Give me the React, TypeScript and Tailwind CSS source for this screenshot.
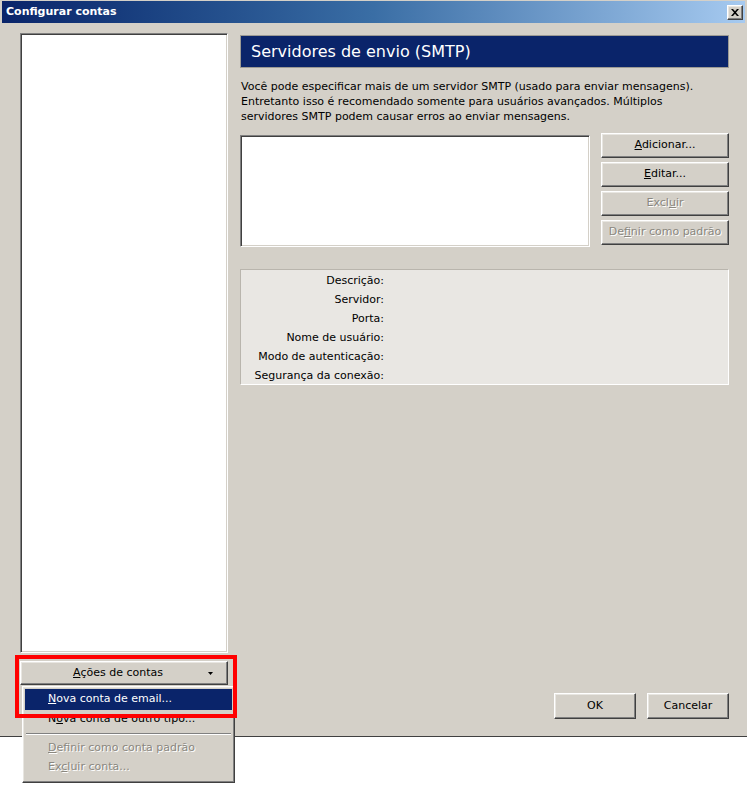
import React from "react";

const raised =
  "border border-t-white border-l-white border-r-[#404040] border-b-[#404040] shadow-[inset_-1px_-1px_#808080,inset_1px_1px_#e8e6e1]";
const sunken =
  "border border-t-[#808080] border-l-[#808080] border-r-white border-b-white shadow-[inset_1px_1px_#404040,inset_-1px_-1px_#d4d0c8]";
const disabled = "text-[#8a877f] [text-shadow:1px_1px_0_#ffffff]";

function Btn({
  children,
  off,
  className = "",
}: {
  children: React.ReactNode;
  off?: boolean;
  className?: string;
}) {
  return (
    <div
      className={`flex items-center justify-center bg-[#d4d0c8] ${raised} ${
        off ? disabled : "text-black"
      } ${className}`}
    >
      {children}
    </div>
  );
}

const labels = [
  "Descrição:",
  "Servidor:",
  "Porta:",
  "Nome de usuário:",
  "Modo de autenticação:",
  "Segurança da conexão:",
];

export default function App() {
  return (
    <div
      className="relative w-[747px] h-[785px] bg-white overflow-hidden text-[11px] text-black"
      style={{ fontFamily: '"DejaVu Sans", "Liberation Sans", sans-serif' }}
    >
      <div className="h-[737px] bg-[#d4d0c8] flex flex-col border-b border-[#404040]">
        {/* title bar */}
        <div className="h-[22px] mx-[2px] mt-[1px] flex items-center justify-between bg-gradient-to-r from-[#0a246a] via-[#3a6ea5] to-[#a6caf0] pl-[4px] pr-[2px]">
          <span className="text-white font-bold text-[11px]">Configurar contas</span>
          <div className={`w-[16px] h-[15px] bg-[#d4d0c8] flex items-center justify-center ${raised}`}>
            <svg width="8" height="7" viewBox="0 0 8 7">
              <path d="M0 0h2l2 2.2L6 0h2L5 3.5 8 7H6L4 4.8 2 7H0l3-3.5z" fill="#000" />
            </svg>
          </div>
        </div>

        {/* body */}
        <div className="flex-1 flex pt-[10px] pl-[20px] pr-[18px] pb-[17px] gap-[12px]">
          {/* left column */}
          <div className="w-[208px] flex flex-col">
            <div className={`h-[620px] bg-white ${sunken}`} />
            <Btn className="mt-[8px] h-[24px] relative">
              <span className="-ml-[12px]">
                <span className="underline">A</span>ções de contas
              </span>
              <svg className="absolute right-[14px] top-[10px]" width="5" height="3" viewBox="0 0 5 3">
                <path d="M0 0h5L2.5 3z" fill="#000" />
              </svg>
            </Btn>
          </div>

          {/* right column */}
          <div className="flex-1 flex flex-col">
            <div className="mt-[2px] h-[33px] bg-[#0a246a] border border-[#9c9a94] flex items-center pl-[10px]">
              <span className="text-white text-[16px]">Servidores de envio (SMTP)</span>
            </div>
            <p className="mt-[11px] leading-[15px] pl-[1px]">
              Você pode especificar mais de um servidor SMTP (usado para enviar mensagens).
              <br />
              Entretanto isso é recomendado somente para usuários avançados. Múltiplos
              <br />
              servidores SMTP podem causar erros ao enviar mensagens.
            </p>
            <div className="mt-[9px] flex gap-[11px] items-start">
              <div className={`mt-[2px] h-[112px] flex-1 bg-white ${sunken}`} />
              <div className="w-[128px] flex flex-col gap-[4px]">
                <Btn className="h-[25px]">
                  <span>
                    <span className="underline">A</span>dicionar...
                  </span>
                </Btn>
                <Btn className="h-[25px]">
                  <span>
                    <span className="underline">E</span>ditar...
                  </span>
                </Btn>
                <Btn className="h-[25px]" off>
                  <span>
                    Excl<span className="underline">u</span>ir
                  </span>
                </Btn>
                <Btn className="h-[25px]" off>
                  <span>
                    De<span className="underline">f</span>inir como padrão
                  </span>
                </Btn>
              </div>
            </div>

            <div className="mt-[22px] h-[116px] bg-[#e9e7e3] border border-t-[#b9b5ad] border-l-[#b9b5ad] border-r-white border-b-white pt-[1px]">
              {labels.map((l) => (
                <div key={l} className="w-[143px] text-right leading-[19px]">
                  {l}
                </div>
              ))}
            </div>

            <div className="mt-auto flex justify-end gap-[11px]">
              <Btn className="w-[82px] h-[26px]">OK</Btn>
              <Btn className="w-[82px] h-[26px]">Cancelar</Btn>
            </div>
          </div>
        </div>
      </div>

      {/* dropdown menu */}
      <div className={`absolute left-[22px] top-[686px] w-[213px] h-[97px] bg-[#d4d0c8] ${raised} pt-[2px] px-[2px]`}>
        <div className="h-[21px] bg-[#0a246a] text-white flex items-center pl-[23px]">
          <span>
            <span className="underline">N</span>ova conta de email...
          </span>
        </div>
        <div className="h-[19px] flex items-center pl-[23px]">
          <span>
            N<span className="underline">o</span>va conta de outro tipo...
          </span>
        </div>
        <div className="h-[10px] flex items-center px-[1px]">
          <div className="w-full border-t border-t-[#808080] border-b border-b-white" />
        </div>
        <div className={`h-[19px] flex items-center pl-[23px] ${disabled}`}>
          <span>
            <span className="underline">D</span>efinir como conta padrão
          </span>
        </div>
        <div className={`h-[19px] flex items-center pl-[23px] ${disabled}`}>
          <span>
            Ex<span className="underline">c</span>luir conta...
          </span>
        </div>
      </div>

      {/* red highlight */}
      <div className="absolute left-[15px] top-[655px] w-[222px] h-[63px] border-[4px] border-[#ff0000] pointer-events-none" />
    </div>
  );
}
